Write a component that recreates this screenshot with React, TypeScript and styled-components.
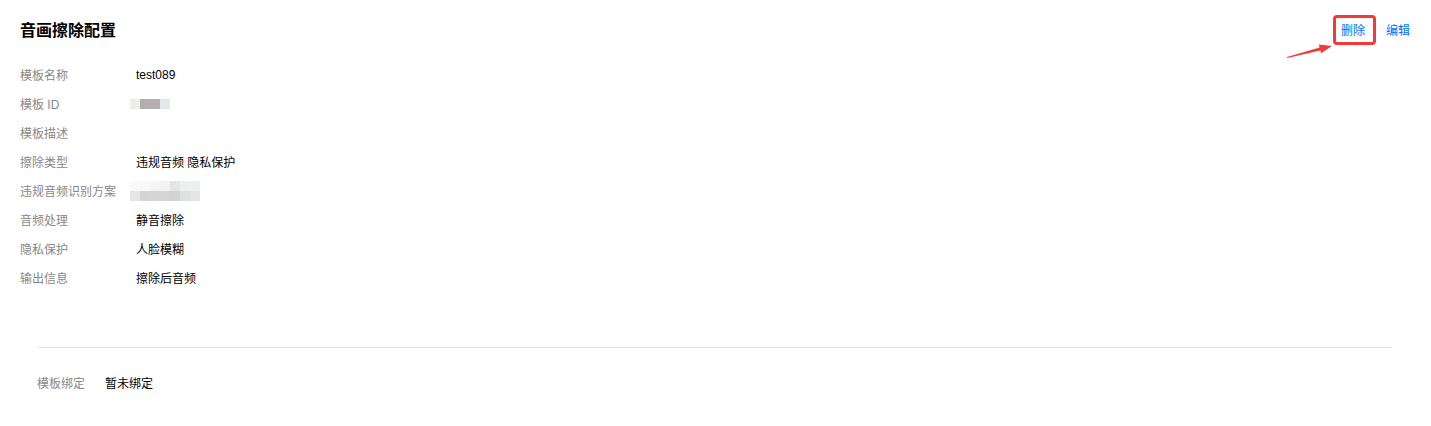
import styled, { createGlobalStyle } from "styled-components";

const GlobalStyle = createGlobalStyle`
  body {
    margin: 0;
    background: #fff;
    font-family: "Liberation Sans", "Noto Sans CJK SC", sans-serif;
  }
`;

const Page = styled.div`
  width: 1431px;
  height: 426px;
  box-sizing: border-box;
  padding: 20px 21px 0 20px;
  background: #fff;
`;

const Header = styled.div`
  display: flex;
  align-items: center;
  justify-content: space-between;
  height: 22px;
`;

const Title = styled.h2`
  margin: 0;
  font-size: 16px;
  line-height: 22px;
  font-weight: 700;
  color: #000;
`;

const Actions = styled.div`
  display: flex;
  align-items: center;
  gap: 21px;
`;

const LinkBtn = styled.span`
  position: relative;
  display: inline-block;
  height: 22px;
  font-size: 12px;
  line-height: 22px;
  color: #006eff;
  cursor: pointer;
`;

const Mark = styled.span`
  position: absolute;
  left: -8px;
  right: -11px;
  top: -5px;
  bottom: -3px;
  border: 3px solid #f23a3a;
  border-radius: 4px;
`;

const Arrow = styled.svg`
  position: absolute;
  left: -54px;
  top: 25px;
  overflow: visible;
`;

const InfoList = styled.div`
  margin-top: 18px;
  display: flex;
  flex-direction: column;
`;

const Row = styled.div<{ $labelWidth?: number }>`
  display: grid;
  grid-template-columns: ${(p) => p.$labelWidth ?? 116}px 1fr;
  align-items: center;
  height: 29px;
  font-size: 12px;
`;

const Label = styled.span`
  color: #888;
`;

const Value = styled.span`
  color: #000;
  display: flex;
  align-items: center;
`;

const Mosaic = styled.div<{ $cols: number }>`
  display: grid;
  grid-template-columns: repeat(${(p) => p.$cols}, 10px);
  grid-auto-rows: 10px;
  margin-left: -6px;
`;

const Cell = styled.span<{ $c: string }>`
  background: ${(p) => p.$c};
`;

const Divider = styled.div`
  margin: 55px 18px 0 17px;
  height: 1px;
  background: #e5e5e5;
`;

const Binding = styled.div`
  margin: 20px 0 0 17px;
`;

const idCells = ["#eeede9", "#b3afb1", "#b3afb1", "#e4e8eb"];
const planCells = [
  "#f9f9f9", "#f8f8f8", "#f6f5f5", "#f1f2f1", "#e5e5e3", "#eceff1", "#edf0f0",
  "#e7e6e7", "#d4d4d4", "#d5d5d7", "#d6d5d4", "#d3d3d7", "#dde1df", "#e2e5e3",
];

const rows: { label: string; value?: string; mosaic?: string[]; cols?: number }[] = [
  { label: "模板名称", value: "test089" },
  { label: "模板 ID", mosaic: idCells, cols: 4 },
  { label: "模板描述" },
  { label: "擦除类型", value: "违规音频 隐私保护" },
  { label: "违规音频识别方案", mosaic: planCells, cols: 7 },
  { label: "音频处理", value: "静音擦除" },
  { label: "隐私保护", value: "人脸模糊" },
  { label: "输出信息", value: "擦除后音频" },
];

export default function App() {
  return (
    <>
      <GlobalStyle />
      <Page>
        <Header>
          <Title>音画擦除配置</Title>
          <Actions>
            <LinkBtn>
              删除
              <Mark />
              <Arrow width="46" height="13" viewBox="0 0 46 13">
                <path
                  d="M0 12 L0.4 13 L33.4 5.4 L34.1 8.3 L45 1 L31.9 -0.5 L32.6 2.4 Z"
                  fill="#f23a3a"
                />
              </Arrow>
            </LinkBtn>
            <LinkBtn>编辑</LinkBtn>
          </Actions>
        </Header>
        <InfoList>
          {rows.map((r) => (
            <Row key={r.label}>
              <Label>{r.label}</Label>
              <Value>
                {r.value}
                {r.mosaic && (
                  <Mosaic $cols={r.cols!}>
                    {r.mosaic.map((c, i) => (
                      <Cell key={i} $c={c} />
                    ))}
                  </Mosaic>
                )}
              </Value>
            </Row>
          ))}
        </InfoList>
        <Divider />
        <Binding>
          <Row $labelWidth={68}>
            <Label>模板绑定</Label>
            <Value>暂未绑定</Value>
          </Row>
        </Binding>
      </Page>
    </>
  );
}
